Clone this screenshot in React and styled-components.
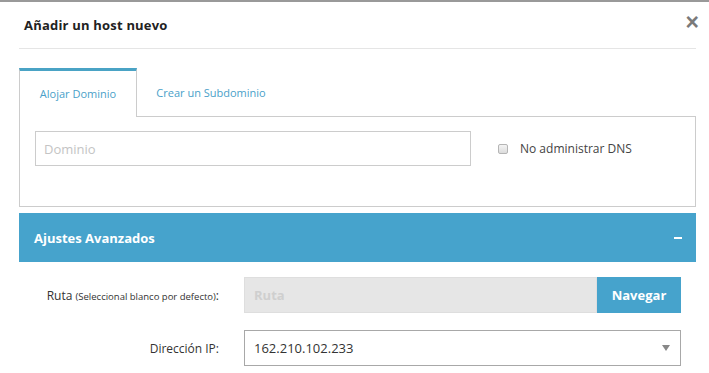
import React from 'react'
import styled, { createGlobalStyle } from 'styled-components'

const GlobalStyle = createGlobalStyle`
  html, body {
    margin: 0;
    padding: 0;
    background: #fff;
    font-family: "Open Sans", "Noto Sans", Arial, sans-serif;
    color: #333;
  }
  * { box-sizing: border-box; }
`

const blue = '#46a3cc'

const TopBar = styled.div`
  height: 2px;
  background: #999;
`

const Modal = styled.div`
  width: 696px;
  padding-left: 19px;
`

const Header = styled.div`
  height: 47px;
  display: flex;
  align-items: center;
  justify-content: space-between;
  border-bottom: 1px solid #e5e5e5;
  padding-left: 5px;
`

const Title = styled.h4`
  margin: 0;
  font-size: 13px;
  font-weight: 700;
  color: #222;
  letter-spacing: 0.2px;
`

const Close = styled.button`
  border: none;
  background: none;
  padding: 0;
  margin-right: -3px;
  margin-bottom: 6px;
  color: #7a7a7a;
  font-size: 23px;
  font-weight: 700;
  line-height: 1;
  cursor: pointer;
  font-family: Arial, sans-serif;
`

const TabList = styled.div`
  display: flex;
  margin-top: 19px;
  height: 48px;
  position: relative;
  z-index: 1;
`

const Tab = styled.div`
  width: ${p => p.$w}px;
  display: flex;
  align-items: center;
  justify-content: center;
  font-size: 11px;
  color: #4a9fc9;
  border-top: 3px solid ${p => (p.$active ? '#4aa3c5' : 'transparent')};
  border-left: 1px solid ${p => (p.$active ? '#ccc' : 'transparent')};
  border-right: 1px solid ${p => (p.$active ? '#ccc' : 'transparent')};
  background: #fff;
  margin-bottom: ${p => (p.$active ? '-1px' : '0')};
  height: ${p => (p.$active ? '49px' : '48px')};
  padding-bottom: 2px;
`

const Panel = styled.div`
  border: 1px solid #ccc;
  height: 91px;
  padding: 14px 15px 0 15px;
  display: flex;
  align-items: flex-start;
`

const TextInput = styled.input`
  width: 436px;
  height: 35px;
  border: 1px solid #ccc;
  padding: 0 8px;
  font-family: inherit;
  font-size: 13px;
  color: #333;
  outline: none;
  &::placeholder { color: #c4c4c4; }
`

const CheckLabel = styled.label`
  display: flex;
  align-items: center;
  margin-left: 27px;
  height: 35px;
  font-size: 12px;
  color: #444;
`

const Box = styled.span`
  width: 10px;
  height: 10px;
  border: 1px solid #b5b5b5;
  border-radius: 2px;
  background: linear-gradient(#f4f4f4, #dcdcdc);
  margin-right: 12px;
`

const AccordionBar = styled.div`
  margin-top: 6px;
  height: 49px;
  background: ${blue};
  display: flex;
  align-items: center;
  justify-content: space-between;
  padding: 0 14px 0 15px;
  color: #fff;
`

const BarTitle = styled.span`
  font-size: 13px;
  font-weight: 700;
`

const Minus = styled.span`
  width: 8px;
  height: 2px;
  background: #fff;
`

const FormRow = styled.div`
  display: flex;
  align-items: center;
  margin-top: ${p => p.$mt}px;
`

const Label = styled.div`
  width: 200px;
  text-align: right;
  font-size: 12px;
  color: #333;
  margin-right: 25px;
  small { font-size: 9.5px; }
`

const Field = styled.div`
  display: flex;
  width: 437px;
  height: ${p => p.$h}px;
`

const DisabledInput = styled.input`
  flex: 1;
  border: 1px solid #dedede;
  background: #e6e6e6;
  padding: 0 9px;
  font-family: inherit;
  font-size: 13px;
  font-weight: 700;
  outline: none;
  &::placeholder { color: #cfcfcf; }
`

const Button = styled.button`
  width: 84px;
  border: none;
  background: ${blue};
  color: #fff;
  font-family: inherit;
  font-size: 13px;
  font-weight: 700;
  padding: 0;
`

const Select = styled.div`
  flex: 1;
  display: flex;
  align-items: center;
  justify-content: space-between;
  border: 1px solid #a8a8a8;
  padding: 0 10px 0 9px;
  font-size: 13px;
  color: #333;
`

const Arrow = styled.span`
  width: 0;
  height: 0;
  border-left: 4px solid transparent;
  border-right: 4px solid transparent;
  border-top: 6px solid #888;
`

export default function App() {
  return (
    <>
      <GlobalStyle />
      <TopBar />
      <Modal>
        <Header>
          <Title>Añadir un host nuevo</Title>
          <Close>×</Close>
        </Header>
        <TabList>
          <Tab $active $w={118}>Alojar Dominio</Tab>
          <Tab $w={148}>Crear un Subdominio</Tab>
        </TabList>
        <Panel>
          <TextInput placeholder="Dominio" />
          <CheckLabel>
            <Box />
            No administrar DNS
          </CheckLabel>
        </Panel>
        <AccordionBar>
          <BarTitle>Ajustes Avanzados</BarTitle>
          <Minus />
        </AccordionBar>
        <FormRow $mt={15}>
          <Label>Ruta <small>(Seleccional blanco por defecto)</small>:</Label>
          <Field $h={36}>
            <DisabledInput placeholder="Ruta" disabled />
            <Button>Navegar</Button>
          </Field>
        </FormRow>
        <FormRow $mt={17}>
          <Label>Dirección IP:</Label>
          <Field $h={36}>
            <Select>
              162.210.102.233
              <Arrow />
            </Select>
          </Field>
        </FormRow>
      </Modal>
    </>
  )
}
